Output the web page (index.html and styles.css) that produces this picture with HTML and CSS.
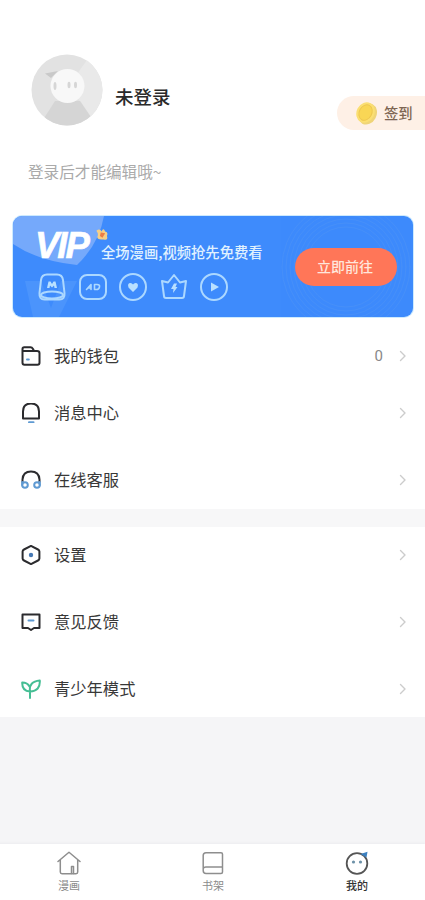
FILE: index.html
```
<!DOCTYPE html>
<html lang="zh-CN">
<head>
<meta charset="utf-8">
<meta name="viewport" content="width=device-width, initial-scale=1">
<title>我的</title>
<link rel="stylesheet" href="styles.css">
</head>
<body>
<div class="app">
  <header class="profile">
    <div class="user">
      <svg class="avatar" viewBox="0 0 72 72">
        <defs><clipPath id="face"><circle cx="36" cy="36" r="35.5"/></clipPath></defs>
        <g clip-path="url(#face)">
          <rect width="72" height="72" fill="#e2e2e2"/>
          <path d="M36 34 56 6 72 0V72H66L50 48Z" fill="#e9e9e9"/>
          <path d="M24 47 8 72H66L49 47Z" fill="#d5d5d5"/>
        </g>
        <path d="M14 19.500 27 17 20 24Z" fill="#c9c9c9"/>
        <circle cx="36.500" cy="32" r="17" fill="#f8f8f8"/>
        <g fill="#d6d6d6"><ellipse cx="24" cy="32" rx="1.500" ry="4"/><ellipse cx="38" cy="31" rx="1.500" ry="3.200"/><ellipse cx="44.500" cy="31" rx="1.500" ry="3.200"/></g>
      </svg>
      <h1 class="name">未登录</h1>
    </div>
    <div class="signin">
      <svg class="coin" viewBox="0 0 24 24">
        <ellipse cx="13" cy="13" rx="9.500" ry="11.500" transform="rotate(28 13 13)" fill="#efd478"/>
        <ellipse cx="11" cy="11.500" rx="9.300" ry="11" transform="rotate(28 11 11.500)" fill="#fbdf72"/>
        <ellipse cx="11" cy="11.500" rx="6.500" ry="8.500" transform="rotate(28 11 11.500)" fill="#f9d655" stroke="#edc650" stroke-width="1"/>
      </svg>
      <span>签到</span>
    </div>
    <p class="bio">登录后才能编辑哦~</p>
  </header>

  <section class="vip">
    <svg class="vip-bg" viewBox="0 0 400 101">
      <path d="M0 0H91Q86 28 64 49Q25 45 0 28Z" fill="#75a9fb"/>
      <path d="M12 65H28L38 92 48 65H64L46 101H20Z" fill="#4b94fc"/>
      <g class="rings">
        <circle cx="333" cy="51" r="40"/><circle cx="333" cy="51" r="44"/><circle cx="333" cy="51" r="48"/><circle cx="333" cy="51" r="52"/><circle cx="333" cy="51" r="56"/><circle cx="333" cy="51" r="60"/><circle cx="333" cy="51" r="64"/>
      </g>
    </svg>
    <div class="vip-main">
      <div class="vip-line">
        <strong class="vip-logo">VIP</strong>
        <svg class="flower" viewBox="0 0 16 16">
          <path d="M1 3Q5 0 7 4 9-1 11 4 15 5 13 9 15 15 9 13 2 14 2 10 4 7 1 3Z" fill="#f6cf86"/>
          <path d="M6 5 11 6 8 11 5 9Z" fill="#ed7d45"/>
        </svg>
        <span class="vip-text">全场漫画,视频抢先免费看</span>
      </div>
      <div class="perks">
        <svg viewBox="0 0 28 28"><path d="M1.500 20 3 7Q3.800 1.500 9 1.500H19Q24.200 1.500 25 7L26.500 20Q27 26.500 21.500 26.500H6.500Q1 26.500 1.500 20Z"/><ellipse cx="14" cy="22" rx="11" ry="3.500"/><path class="solid" d="M9 15 10.500 8.500H12.500L14 11 15.500 8.500H17.500L19 15H16.500L16 12.500 14 14.500 12 12.500 11.500 15Z"/></svg>
        <svg viewBox="0 0 28 28"><rect x="1" y="2" width="26" height="24" rx="7"/><path class="thin" d="M7.500 16.500 12 11.500V16.500M9 15H12M15.500 16.500V11.500H18Q21 11.500 20.500 14T17.500 16.500Z"/></svg>
        <svg viewBox="0 0 28 28"><circle cx="14" cy="14" r="13"/><path class="solid" d="M14 19 9.500 14.500Q8 10 11.500 10 13 10 14 11.500 15 10 16.500 10 20 10 18.500 14.500Z"/></svg>
        <svg viewBox="0 0 28 28"><path d="M2 8 8 9.500 14 2 20 9.500 26 8 24 23Q24 25 22 25H6Q4 25 4 23Z"/><path class="solid" d="M14 10.500H17L15.500 14H17.500L13 20 13.500 16H11Z"/></svg>
        <svg viewBox="0 0 28 28"><circle cx="14" cy="14" r="13"/><path class="solid" d="M11 9.500 19 14 11 18.500Z"/></svg>
      </div>
    </div>
    <button class="go">立即前往</button>
  </section>

  <nav class="menu first">
    <a class="row">
      <svg class="icon" viewBox="0 0 20 20"><path d="M1.500 5V3Q1.500 1.300 3.200 1.300H9.500Q11 1.300 12 3L13 5M1.500 5H16Q18.500 5 18.500 7.200V16.800Q18.500 18.700 16.500 18.700H3.500Q1.500 18.700 1.500 16.800Z"/><path class="blue" d="M6 13.500H7.800"/></svg>
      <span class="label">我的钱包</span><span class="count">0</span>
      <svg class="chevron" viewBox="0 0 8 12"><path d="M1.500 1.500 6 6 1.500 10.500"/></svg>
    </a>
    <a class="row">
      <svg class="icon" viewBox="0 0 20 20"><path d="M2 15.500V8.500Q2 .500 10 .500T18 8.500V15.500Z"/><path class="blue" d="M8 19.200H12.500"/></svg>
      <span class="label">消息中心</span>
      <svg class="chevron" viewBox="0 0 8 12"><path d="M1.500 1.500 6 6 1.500 10.500"/></svg>
    </a>
    <a class="row service">
      <svg class="icon" viewBox="0 0 20 20"><path d="M1.500 12V9.500Q2 1.500 10 1.500T18.500 9.500V12"/><path class="blue" d="M1.200 12V15M18.800 12V15"/><circle class="blue" cx="4" cy="15" r="2.800"/><circle class="blue" cx="16" cy="15" r="2.800"/></svg>
      <span class="label">在线客服</span>
      <svg class="chevron" viewBox="0 0 8 12"><path d="M1.500 1.500 6 6 1.500 10.500"/></svg>
    </a>
  </nav>

  <nav class="menu second">
    <a class="row">
      <svg class="icon" viewBox="0 0 20 20"><path d="M10 .900 17 4.500Q18.400 5.200 18.400 6.500V13.500Q18.400 14.800 17 15.500L10 19.100 3 15.500Q1.600 14.800 1.600 13.500V6.500Q1.600 5.200 3 4.500Z"/><circle class="dot" cx="10" cy="10" r="2.200"/></svg>
      <span class="label">设置</span>
      <svg class="chevron" viewBox="0 0 8 12"><path d="M1.500 1.500 6 6 1.500 10.500"/></svg>
    </a>
    <a class="row">
      <svg class="icon" viewBox="0 0 20 20"><path d="M1.500 2.500H18.500V16H13L10 18 7 16H1.500Z"/><path class="blue" d="M7.500 8.500H12.500"/></svg>
      <span class="label">意见反馈</span>
      <svg class="chevron" viewBox="0 0 8 12"><path d="M1.500 1.500 6 6 1.500 10.500"/></svg>
    </a>
    <a class="row">
      <svg class="icon sprout" viewBox="0 0 20 20"><path d="M9 19V12.500Q7.500 2.500 18.800 1.500 19.500 12 9 12.500Q1 12 1.200 3.500 6.500 3.500 8.500 7.500"/></svg>
      <span class="label">青少年模式</span>
      <svg class="chevron" viewBox="0 0 8 12"><path d="M1.500 1.500 6 6 1.500 10.500"/></svg>
    </a>
  </nav>

  <footer class="tabs">
    <a class="tab">
      <svg viewBox="0 0 24 24"><path d="M1 10.500 12 1.200 23 10.500M3.300 9V21Q3.300 22.700 5 22.700H19Q20.700 22.700 20.700 21V9"/><path d="M14.500 22.500V15.500H16.500V22.500"/></svg>
      <span>漫画</span>
    </a>
    <a class="tab">
      <svg viewBox="0 0 24 24"><path d="M5 1.700H20Q21.500 1.700 21.500 3.200V21Q21.500 22.500 20 22.500H5Q2.200 22.500 2.200 19.500V4.500Q2.200 1.700 5 1.700ZM2.200 18Q2.500 16 5 16H21.500"/></svg>
      <span>书架</span>
    </a>
    <a class="tab active">
      <svg viewBox="0 0 24 24"><circle cx="12" cy="12.500" r="10.300"/><path class="tuft" d="M15.500 3 22.500.800 21.500 6.500Z"/><circle class="eye" cx="8.500" cy="11" r="1.600"/><circle class="eye" cx="15.500" cy="11" r="1.600"/></svg>
      <span>我的</span>
    </a>
  </footer>
</div>
</body>
</html>
```

FILE: styles.css
```
* { box-sizing: border-box; }
body {
  margin: 0;
  color: #383838;
  font-family: "Noto Sans CJK SC", sans-serif;
}
.app {
  display: flex;
  flex-direction: column;
  height: 900px;
  overflow: hidden;
  background: linear-gradient(#fff 0 330px, #f7f7f8 330px 600px, #f5f5f7 600px);
}
svg { flex: none; fill: none; stroke-linecap: round; stroke-linejoin: round; }

.profile {
  display: grid;
  grid-template-columns: 1fr 88px;
  grid-template-rows: 106px 1fr;
  height: 216px;
  padding-top: 54px;
  background: #fff;
}
.user { display: flex; align-items: flex-start; gap: 12px; padding-left: 31px; }
.avatar { width: 72px; height: 72px; }
.name { margin: 28px 0 0; font-size: 18.500px; line-height: 28px; font-weight: 500; color: #2a2a2a; }
.signin {
  display: flex;
  align-items: center;
  gap: 6px;
  height: 34px;
  margin-top: 42px;
  padding-left: 18px;
  border-radius: 17px 0 0 17px;
  background: #fef0e6;
  color: #7d6552;
  font-size: 14.300px;
  font-weight: 500;
}
.signin span { margin-top: -2px; }
.coin { width: 23px; height: 24px; }
.bio { margin: 0; padding-left: 28px; font-size: 15.600px; line-height: 23px; color: #aaa; }

.vip {
  position: relative;
  display: flex;
  height: 101px;
  flex: none;
  margin: 0 12px 0 13px;
  border-radius: 9px;
  overflow: hidden;
  background: #3e8bfc;
  box-shadow: 0 0 0 1px #cdeafe;
}
.vip-bg { position: absolute; inset: 0; width: 400px; height: 101px; }
.rings { stroke: #5998f2; stroke-width: .6; opacity: .6; }
.vip-main { position: relative; width: 282px; padding-left: 22px; }
.vip-line { display: flex; align-items: flex-start; height: 57px; white-space: nowrap; }
.vip-logo {
  width: 60px;
  margin-top: 6px;
  font: italic 700 36.500px/48px "Liberation Sans", sans-serif;
  letter-spacing: -2px;
  color: #fff;
  -webkit-text-stroke: .6px #fff;
}
.flower { width: 15px; height: 14px; margin-top: 12px; }
.vip-text { margin: 25px 0 0 -9px; font-size: 14.300px; line-height: 22px; font-weight: 500; color: #e0f2ff; }
.perks { display: flex; gap: 12.500px; padding-left: 3px; }
.perks svg { width: 28px; height: 28px; stroke: #acd8ff; stroke-width: 2; }
.perks .solid { fill: #b9e0ff; stroke: none; }
.perks .thin { stroke-width: 1.600; }
.go {
  position: relative;
  width: 102px;
  height: 38px;
  margin-top: 32px;
  padding: 0 2px 2px 0;
  border: 0;
  border-radius: 19px;
  background: #ff7658;
  color: #ffe6dc;
  font: 500 14px/36px "Noto Sans CJK SC", sans-serif;
}

.menu { display: flex; flex-direction: column; background: #fff; }
.first { height: 192px; padding-top: 11px; }
.first .row + .row { margin-top: 1px; }
.first .row.service { margin-top: 11px; }
.second { height: 190px; margin-top: 18px; gap: 11px; }
.row { display: flex; align-items: center; height: 56px; padding: 0 18px 0 21px; }
.icon { width: 20px; height: 20px; margin-right: 13px; stroke: #2b2b2e; stroke-width: 2; }
.icon .blue { stroke: #5f9ad2; }
.icon .dot { fill: #4678b4; stroke: none; }
.icon.sprout { stroke: #45be94; }
.label { flex: 1; margin-top: -2px; font-size: 16.300px; line-height: 24px; }
.count { margin-right: 16px; font: 400 15px/20px Roboto, sans-serif; color: #888; }
.chevron { width: 8px; height: 12px; stroke: #ccc; stroke-width: 1.400; }

.tabs {
  display: grid;
  grid-template-columns: 144px 144px 144px;
  height: 56px;
  margin-top: auto;
  margin-left: -3px;
  background: #fff;
  box-shadow: 0 -1px 2px #ececef;
}
.tab { display: flex; flex-direction: column; align-items: center; padding-top: 7px; color: #8b8b8b; font-size: 11px; line-height: 16px; }
.tab svg { width: 24px; height: 24px; margin-bottom: 2px; stroke: #8e8e8e; stroke-width: 1.500; }
.tab.active { color: #333; font-weight: 500; }
.tab.active svg { stroke: #555; stroke-width: 1.800; }
.tab .tuft { fill: #3c80c0; stroke: none; }
.tab .eye { fill: #6d91a8; stroke: none; }
```
